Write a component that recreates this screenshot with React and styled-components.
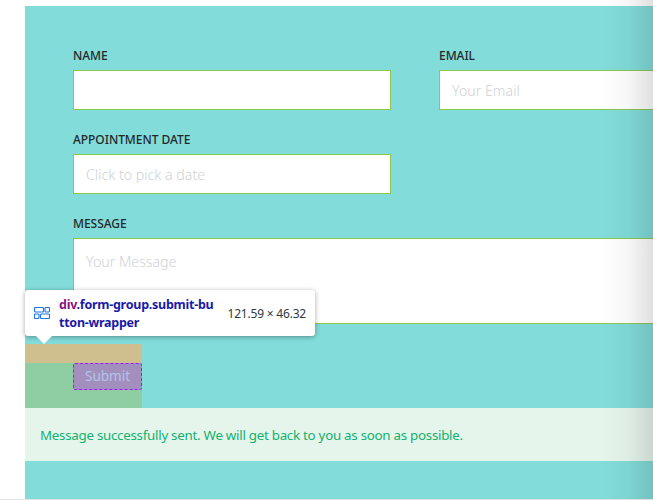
import styled, { createGlobalStyle } from "styled-components";

const GlobalStyle = createGlobalStyle`
  html, body {
    margin: 0;
    padding: 0;
    background: #fff;
    overflow: hidden;
    height: 500px;
  }
  body {
    font-family: "Noto Sans", "Open Sans", sans-serif;
  }
`;

const Page = styled.div`
  position: relative;
  width: 653px;
  height: 500px;
  padding: 6px 0 0 25px;
  box-sizing: border-box;
  overflow: hidden;
  border-bottom: 1px solid #e2e2e2;
`;

const Panel = styled.div`
  width: 700px;
  height: 493px;
  background: #82dcd9;
  padding-top: 41px;
  box-sizing: border-box;
`;

const Fields = styled.div`
  display: grid;
  grid-template-columns: 318px 318px;
  column-gap: 48px;
  row-gap: 21px;
  padding-left: 48px;
`;

const Field = styled.div`
  display: flex;
  flex-direction: column;
  grid-column: ${(p) => (p.$wide ? "1 / span 2" : "auto")};
`;

const Label = styled.label`
  height: 23px;
  font-size: 12px;
  line-height: 18px;
  font-weight: 500;
  letter-spacing: -0.05px;
  text-transform: uppercase;
  color: #23282c;
`;

const Input = styled.div`
  height: ${(p) => (p.$tall ? "86px" : "40px")};
  box-sizing: border-box;
  background: #fff;
  border: 1px solid #8fc74f;
  padding: ${(p) => (p.$tall ? "13px 12px" : "2px 12px 0")};
  display: flex;
  align-items: ${(p) => (p.$tall ? "flex-start" : "center")};
  font-size: 14.2px;
  font-weight: 300;
  line-height: 20px;
  color: #cfd2d4;
`;

const SubmitWrapper = styled.div`
  width: 117px;
  height: 64px;
  margin-top: 20px;
  padding-left: 48px;
  box-sizing: border-box;
  background: #8fcea3;
  border-top: 19px solid #cfbf8e;
`;

const SubmitButton = styled.button`
  display: block;
  width: 69px;
  height: 27px;
  padding: 0 0 2px;
  box-sizing: border-box;
  border: 1px dashed #9a1cff;
  border-radius: 2px;
  background: #a38fbd;
  font-family: inherit;
  font-size: 13.5px;
  font-weight: 400;
  color: #b3c4ea;
`;

const Alert = styled.div`
  height: 53px;
  display: flex;
  align-items: center;
  padding-left: 15px;
  background: #e6f5ec;
  font-size: 13.3px;
  letter-spacing: -0.25px;
  font-weight: 400;
  color: #10b26c;
`;

const EdgeShadow = styled.div`
  position: absolute;
  top: 0;
  right: 0;
  bottom: 0;
  width: 52px;
  background: linear-gradient(
    to right,
    rgba(0, 0, 0, 0),
    rgba(0, 0, 0, 0.03) 50%,
    rgba(0, 0, 0, 0.12)
  );
`;

const Tooltip = styled.div`
  position: absolute;
  left: 25px;
  top: 290px;
  width: 290px;
  height: 46px;
  box-sizing: border-box;
  padding: 0 9px;
  display: flex;
  align-items: center;
  background: #fff;
  border-radius: 3px;
  box-shadow: 0 1px 5px rgba(0, 0, 0, 0.35);

  &::after {
    content: "";
    position: absolute;
    left: 11px;
    bottom: -8px;
    border-left: 8px solid transparent;
    border-right: 8px solid transparent;
    border-top: 8px solid #fff;
  }
`;

const TooltipIcon = styled.svg`
  width: 16px;
  height: 12px;
  flex: none;
  margin-right: 9px;
`;

const Selector = styled.div`
  width: 157px;
  flex: none;
  padding-top: 2px;
  font-size: 12.5px;
  font-weight: 700;
  letter-spacing: -0.25px;
  line-height: 18px;
  word-break: break-all;
  color: #1a1aa6;
`;

const Tag = styled.span`
  color: #881280;
`;

const Size = styled.div`
  margin-left: auto;
  font-size: 12px;
  letter-spacing: -0.2px;
  color: #303942;
  white-space: nowrap;
`;

export default function App() {
  return (
    <Page>
      <GlobalStyle />
      <Panel>
        <Fields>
          <Field>
            <Label>Name</Label>
            <Input />
          </Field>
          <Field>
            <Label>Email</Label>
            <Input>Your Email</Input>
          </Field>
          <Field>
            <Label>Appointment Date</Label>
            <Input>Click to pick a date</Input>
          </Field>
          <div />
          <Field $wide>
            <Label>Message</Label>
            <Input $tall>Your Message</Input>
          </Field>
        </Fields>
        <SubmitWrapper>
          <SubmitButton>Submit</SubmitButton>
        </SubmitWrapper>
        <Alert>Message successfully sent. We will get back to you as soon as possible.</Alert>
      </Panel>
      <EdgeShadow />
      <Tooltip>
        <TooltipIcon viewBox="0 0 16 12" fill="none" stroke="#1a73e8" strokeWidth="1.1">
          <rect x="0.5" y="0.5" width="9" height="4.5" rx="1" />
          <rect x="11" y="0.5" width="4.5" height="4.5" rx="1" />
          <rect x="0.5" y="7" width="4.5" height="4.5" rx="1" />
          <rect x="6.5" y="7" width="9" height="4.5" rx="1" />
        </TooltipIcon>
        <Selector>
          <Tag>div</Tag>.form-group.submit-button-wrapper
        </Selector>
        <Size>121.59 × 46.32</Size>
      </Tooltip>
    </Page>
  );
}
